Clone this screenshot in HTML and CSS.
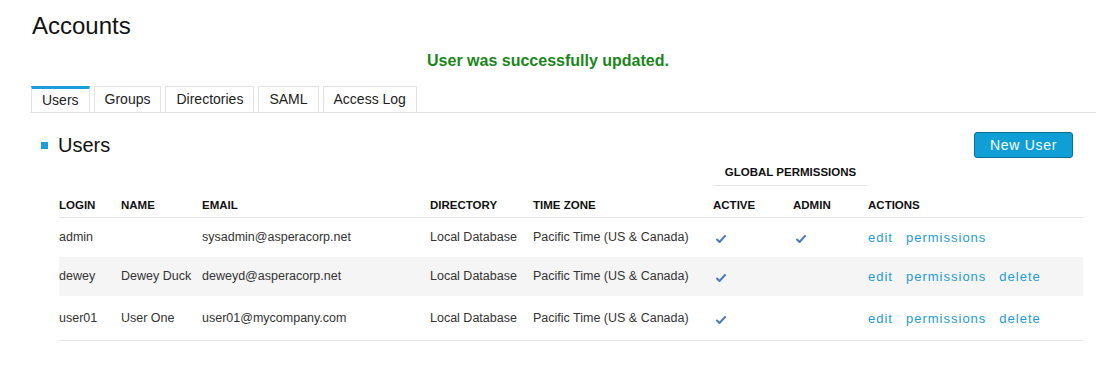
FILE: index.html
```html
<!DOCTYPE html>
<html lang="en">
  <head>
    <meta charset="UTF-8" />
    <title>Accounts</title>
    <link rel="stylesheet" href="styles.css">
  </head>
  <body>
    <h1 class="page-title">Accounts</h1>
    <p class="flash-notice">User was successfully updated.</p>

    <div class="tabs">
      <a href="#" class="tab tab-active">Users</a>
      <a href="#" class="tab">Groups</a>
      <a href="#" class="tab">Directories</a>
      <a href="#" class="tab">SAML</a>
      <a href="#" class="tab">Access Log</a>
    </div>

    <div class="section-header">
      <h2 class="section-title"><span class="bullet"></span>Users</h2>
      <button class="new-btn">New User</button>
    </div>

    <table class="users-table">
      <colgroup>
        <col style="width: 62px" />
        <col style="width: 81px" />
        <col style="width: 228px" />
        <col style="width: 103px" />
        <col style="width: 180px" />
        <col style="width: 80px" />
        <col style="width: 75px" />
        <col />
      </colgroup>
      <thead>
        <tr class="group-row">
          <th></th><th></th><th></th><th></th><th></th>
          <th colspan="2" class="group-cell">GLOBAL PERMISSIONS</th>
          <th></th>
        </tr>
        <tr class="head-row">
          <th>LOGIN</th>
          <th>NAME</th>
          <th>EMAIL</th>
          <th>DIRECTORY</th>
          <th>TIME ZONE</th>
          <th>ACTIVE</th>
          <th>ADMIN</th>
          <th>ACTIONS</th>
        </tr>
      </thead>
      <tbody>
        <tr>
          <td>admin</td>
          <td></td>
          <td>sysadmin@asperacorp.net</td>
          <td>Local Database</td>
          <td>Pacific Time (US &amp; Canada)</td>
          <td><svg class="check" width="10" height="8" viewBox="0 0 10 8"><path d="M1 4.5 L3.5 7 L9 1" /></svg></td>
          <td><svg class="check" width="10" height="8" viewBox="0 0 10 8"><path d="M1 4.5 L3.5 7 L9 1" /></svg></td>
          <td>
            <div class="actions">
              <a href="#">edit</a>
              <a href="#">permissions</a>
            </div>
          </td>
        </tr>
        <tr class="striped">
          <td>dewey</td>
          <td>Dewey Duck</td>
          <td>deweyd@asperacorp.net</td>
          <td>Local Database</td>
          <td>Pacific Time (US &amp; Canada)</td>
          <td><svg class="check" width="10" height="8" viewBox="0 0 10 8"><path d="M1 4.5 L3.5 7 L9 1" /></svg></td>
          <td></td>
          <td>
            <div class="actions">
              <a href="#">edit</a>
              <a href="#">permissions</a>
              <a href="#">delete</a>
            </div>
          </td>
        </tr>
        <tr class="last-row">
          <td>user01</td>
          <td>User One</td>
          <td>user01@mycompany.com</td>
          <td>Local Database</td>
          <td>Pacific Time (US &amp; Canada)</td>
          <td><svg class="check" width="10" height="8" viewBox="0 0 10 8"><path d="M1 4.5 L3.5 7 L9 1" /></svg></td>
          <td></td>
          <td>
            <div class="actions">
              <a href="#">edit</a>
              <a href="#">permissions</a>
              <a href="#">delete</a>
            </div>
          </td>
        </tr>
      </tbody>
    </table>
  </body>
</html>
```

FILE: styles.css
```css
* {
  margin: 0;
  padding: 0;
  box-sizing: border-box;
  font-family: "Liberation Sans", Arial, sans-serif;
}

body {
  background-color: white;
  color: #222;
}

.page-title {
  margin: 12px 0 0 32px;
  font-size: 24px;
  line-height: 28px;
  font-weight: normal;
  color: #111;
}

.flash-notice {
  margin-top: 11px;
  text-align: center;
  font-size: 16px;
  line-height: 20px;
  font-weight: bold;
  color: #1a861a;
}

.tabs {
  display: flex;
  gap: 4px;
  margin: 15px 0 0 30px;
  padding-left: 1px;
  border-bottom: 1px solid #e3e3e3;
}

.tab {
  display: block;
  height: 26px;
  padding: 0 10px;
  border: 1px solid #e2e2e2;
  border-bottom: none;
  font-size: 14px;
  line-height: 25px;
  color: #222;
  text-decoration: none;
}

.tab-active {
  border-top: 3px solid #1a9dd9;
  line-height: 23px;
}

.section-header {
  display: flex;
  justify-content: space-between;
  align-items: center;
  margin-top: 19px;
  padding: 0 23px 0 41px;
}

.section-title {
  display: flex;
  align-items: center;
  gap: 10px;
  font-size: 20px;
  line-height: 24px;
  font-weight: normal;
  color: #111;
}

.bullet {
  width: 7px;
  height: 7px;
  background-color: #1a9dd9;
}

.new-btn {
  height: 26px;
  padding: 0 15px;
  background-color: #0f9fd6;
  border: 1px solid #0a6f93;
  border-radius: 3px;
  color: white;
  font-size: 14px;
  letter-spacing: 0.7px;
  cursor: pointer;
}

.users-table {
  margin: 0 0 0 59px;
  width: 1024px;
  table-layout: fixed;
  border-collapse: separate;
  border-spacing: 0;
  font-size: 12.5px;
}

.users-table th {
  text-align: left;
  font-size: 11.5px;
  font-weight: bold;
  color: #111;
  line-height: 14px;
}

.group-row th {
  padding: 7px 0 7px;
}

.group-row .group-cell {
  text-align: center;
  padding-bottom: 6px;
  border-bottom: 1px solid #e5e5e5;
}

.head-row th {
  padding: 12px 0 5px;
  border-bottom: 1px solid #e5e5e5;
}

.users-table td {
  padding: 12px 0;
  line-height: 15px;
  color: #333;
  white-space: nowrap;
}

.striped td {
  background-color: #f5f5f5;
}

.last-row td {
  padding: 15px 0 14px;
  border-bottom: 1px solid #e5e5e5;
}

.check {
  display: block;
  margin: 2px 0 0 3px;
}

.check path {
  fill: none;
  stroke: #4d7ab8;
  stroke-width: 2;
  stroke-linecap: round;
  stroke-linejoin: round;
}

.actions {
  display: flex;
  gap: 13px;
}

.actions a {
  font-size: 13px;
  color: #1e9bd7;
  text-decoration: none;
  letter-spacing: 1px;
}
```
